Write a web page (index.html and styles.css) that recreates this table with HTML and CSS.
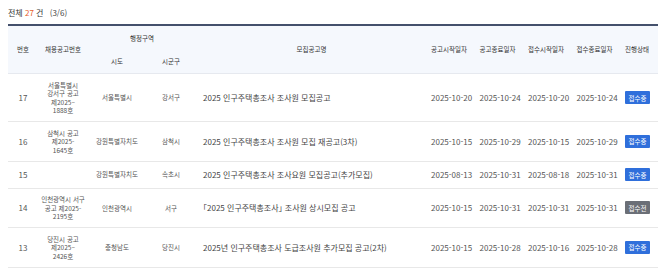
FILE: index.html
```html
<!DOCTYPE html>
<html lang="ko">
<head>
<meta charset="utf-8">
<link rel="stylesheet" href="styles.css">
</head>
<body>
<div class="summary">전체 <span class="count">27</span> 건 <span class="page">(3/6)</span></div>
<table class="list">
  <colgroup>
    <col class="c-no"><col class="c-num"><col class="c-sido"><col class="c-sgg"><col class="c-title">
    <col class="c-date"><col class="c-date"><col class="c-date"><col class="c-date"><col class="c-status">
  </colgroup>
  <thead>
    <tr>
      <th rowspan="2">번호</th>
      <th rowspan="2">채용공고번호</th>
      <th colspan="2">행정구역</th>
      <th rowspan="2">모집공고명</th>
      <th rowspan="2" class="left">공고시작일자</th>
      <th rowspan="2" class="left">공고종료일자</th>
      <th rowspan="2" class="left">접수시작일자</th>
      <th rowspan="2" class="left">접수종료일자</th>
      <th rowspan="2" class="left">진행상태</th>
    </tr>
    <tr>
      <th>시도</th>
      <th>시군구</th>
    </tr>
  </thead>
  <tbody>
    <tr>
      <td class="no">17</td>
      <td class="small">서울특별시<br>강서구 공고<br>제2025–<br>1888호</td>
      <td class="small">서울특별시</td>
      <td class="small">강서구</td>
      <td class="title">2025 인구주택총조사 조사원 모집공고</td>
      <td class="date">2025-10-20</td>
      <td class="date">2025-10-24</td>
      <td class="date">2025-10-20</td>
      <td class="date">2025-10-24</td>
      <td class="status"><span class="badge on">접수중</span></td>
    </tr>
    <tr>
      <td class="no">16</td>
      <td class="small">삼척시 공고<br>제2025-<br>1645호</td>
      <td class="small">강원특별자치도</td>
      <td class="small">삼척시</td>
      <td class="title">2025 인구주택총조사 조사원 모집 재공고(3차)</td>
      <td class="date">2025-10-15</td>
      <td class="date">2025-10-29</td>
      <td class="date">2025-10-15</td>
      <td class="date">2025-10-29</td>
      <td class="status"><span class="badge on">접수중</span></td>
    </tr>
    <tr>
      <td class="no">15</td>
      <td class="small"></td>
      <td class="small">강원특별자치도</td>
      <td class="small">속초시</td>
      <td class="title">2025 인구주택총조사 조사요원 모집공고(추가모집)</td>
      <td class="date">2025-08-13</td>
      <td class="date">2025-10-31</td>
      <td class="date">2025-08-18</td>
      <td class="date">2025-10-31</td>
      <td class="status"><span class="badge on">접수중</span></td>
    </tr>
    <tr>
      <td class="no">14</td>
      <td class="small">인천광역시 서구<br>공고 제2025-<br>2195호</td>
      <td class="small">인천광역시</td>
      <td class="small">서구</td>
      <td class="title"><span class="punct">「</span>2025 인구주택총조사<span class="punct">」</span> 조사원 상시모집 공고</td>
      <td class="date">2025-10-15</td>
      <td class="date">2025-10-31</td>
      <td class="date">2025-10-31</td>
      <td class="date">2025-10-31</td>
      <td class="status"><span class="badge before">접수전</span></td>
    </tr>
    <tr>
      <td class="no">13</td>
      <td class="small">당진시 공고<br>제2025–<br>2426호</td>
      <td class="small">충청남도</td>
      <td class="small">당진시</td>
      <td class="title">2025년 인구주택총조사 도급조사원 추가모집 공고(2차)</td>
      <td class="date">2025-10-15</td>
      <td class="date">2025-10-28</td>
      <td class="date">2025-10-16</td>
      <td class="date">2025-10-28</td>
      <td class="status"><span class="badge on">접수중</span></td>
    </tr>
  </tbody>
</table>
</body>
</html>
```
FILE: styles.css
```css
html, body {
  background: #fff;
}
body {
  margin: 8px;
  font-family: "Noto Sans CJK KR", "Noto Sans", sans-serif;
  font-size: 8px;
  line-height: 9px;
  color: #444;
}
.summary {
  font-size: 8px;
  line-height: 9px;
  color: #333;
  margin-bottom: 7px;
}
.summary .count {
  color: #e8602c;
}
.summary .page {
  margin-left: 4px;
  color: #444;
}
.list {
  width: 100%;
  table-layout: fixed;
  border-collapse: collapse;
  border-top: 2px solid #44506c;
}
.c-no { width: 30px; }
.c-num { width: 50px; }
.c-sido { width: 58px; }
.c-sgg { width: 50px; }
.c-title { width: 231px; }
.c-date { width: 48.5px; }
.c-status { width: 37px; }

.list thead th {
  background: #f5f8fd;
  font-size: 6.5px;
  line-height: 8.5px;
  font-weight: normal;
  color: #333;
  padding: 7.5px 2px;
  text-align: center;
  white-space: nowrap;
}
.list thead tr:last-child th,
.list thead th[rowspan] {
  border-bottom: 1px solid #e6e9ef;
}
.list thead th.left {
  text-align: left;
  padding-left: 4px;
}
.list td {
  border-bottom: 1px solid #e8e8e8;
  padding: 6.5px 2px;
  text-align: center;
  vertical-align: middle;
  font-size: 8px;
  line-height: 9px;
}
.list td.no {
  color: #555;
}
.list td.small {
  font-size: 6.5px;
  line-height: 8.5px;
  color: #555;
}
.list td.title {
  text-align: left;
  padding-left: 7px;
  color: #444;
  white-space: nowrap;
}
.punct {
  font-feature-settings: "halt";
}
.list td.date {
  text-align: left;
  padding-left: 4px;
  color: #555;
  white-space: nowrap;
}
.list td.status {
  text-align: left;
  padding-left: 4px;
  font-size: 6.5px;
  line-height: 8px;
}
.badge {
  display: inline-block;
  font-size: 6.5px;
  line-height: 8px;
  padding: 2.5px 3.5px;
  color: #fff;
  border-radius: 1px;
  vertical-align: middle;
}
.badge.on {
  background: #2f6fdb;
}
.badge.before {
  background: #6b6f77;
}
```
